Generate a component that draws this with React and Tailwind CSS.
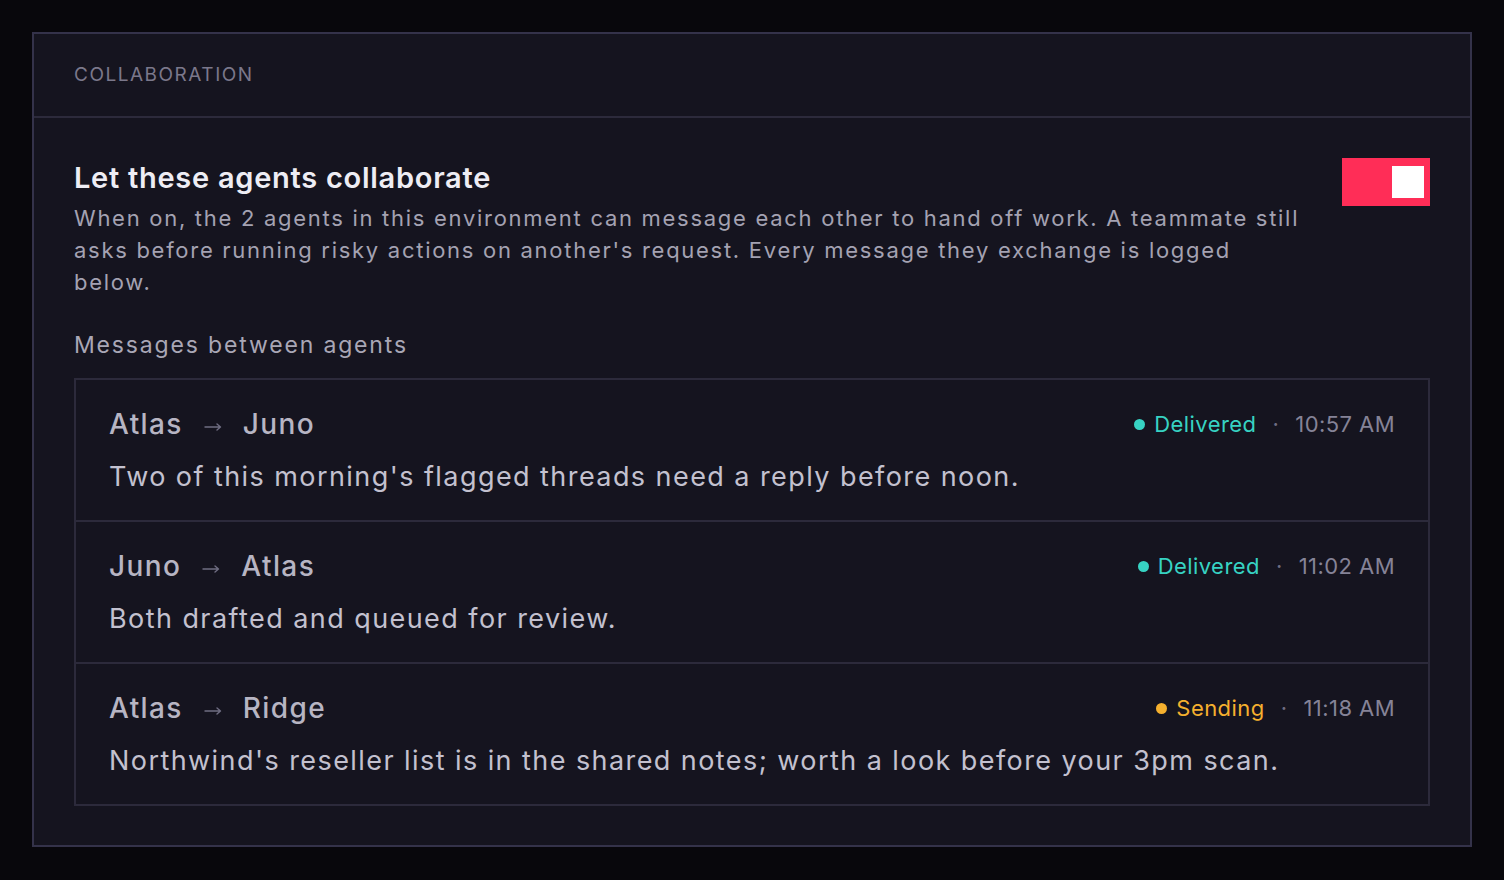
import React, { useState } from 'react';

const messages = [
  {
    from: 'Atlas',
    to: 'Juno',
    status: 'Delivered',
    time: '10:57 AM',
    body: "Two of this morning's flagged threads need a reply before noon.",
  },
  {
    from: 'Juno',
    to: 'Atlas',
    status: 'Delivered',
    time: '11:02 AM',
    body: 'Both drafted and queued for review.',
  },
  {
    from: 'Atlas',
    to: 'Ridge',
    status: 'Sending',
    time: '11:18 AM',
    body: "Northwind's reseller list is in the shared notes; worth a look before your 3pm scan.",
  },
];

const StatusTag = ({ status }) => {
  const sending = status === 'Sending';
  return (
    <span className={`flex items-center gap-[9px] ${sending ? 'text-[#f5b02e]' : 'text-[#37d3c3]'}`}>
      <span className={`h-[11px] w-[11px] rounded-full ${sending ? 'bg-[#f5b02e]' : 'bg-[#37d3c3]'}`} />
      {status}
    </span>
  );
};

const Arrow = () => (
  <svg width="18" height="10" viewBox="0 0 18 10" className="mx-[21px] mt-[6px] text-[#6f6d82]" fill="none">
    <path d="M1 5h15.5M13 2l3.5 3-3.5 3" stroke="currentColor" strokeWidth="1.4" strokeLinecap="round" strokeLinejoin="round" />
  </svg>
);

const MessageRow = ({ msg, last }) => (
  <div className={`flex flex-col px-[33px] pt-[26px] ${last ? 'h-[140px]' : 'h-[142px] border-b-2 border-[#2c2a3b]'}`}>
    <div className="flex h-[36px] items-center justify-between">
      <div className="flex items-center text-[28px] font-medium tracking-[0.05em] text-[#b7b5c3]">
        <span>{msg.from}</span>
        <Arrow />
        <span>{msg.to}</span>
      </div>
      <div className="flex items-center text-[22px] tracking-[0.02em]">
        <StatusTag status={msg.status} />
        <span className="mx-[16px] text-[#6f6d82]">·</span>
        <span className="text-[#858397]">{msg.time}</span>
      </div>
    </div>
    <p className="mt-[17px] text-[27px] leading-[36px] tracking-[0.053em] text-[#c3c1cf]">{msg.body}</p>
  </div>
);

export default function App() {
  const [enabled, setEnabled] = useState(true);

  return (
    <div
      className="min-h-[880px] bg-[#08070c] p-[32px]"
      style={{ fontFamily: 'Inter, "Noto Sans", sans-serif' }}
    >
      <div className="border-2 border-[#34324a] bg-[#15141f]">
        <div className="flex h-[84px] items-center border-b-2 border-[#2c2a3b] px-[40px]">
          <h2 className="text-[19px] tracking-[0.08em] text-[#7b788b]">COLLABORATION</h2>
        </div>

        <div className="px-[40px] pb-[39px] pt-[42px]">
          <div className="flex items-start justify-between gap-6">
            <div>
              <h3 className="text-[29px] font-semibold leading-[36px] tracking-[0.025em] text-[#eeedf4]">
                Let these agents collaborate
              </h3>
              <p className="mt-[6px] max-w-[1232px] text-[22px] leading-[32px] tracking-[0.078em] text-[#a4a2b2]">
                When on, the 2 agents in this environment can message each other to hand off work. A teammate still
                asks before running risky actions on another's request. Every message they exchange is logged below.
              </p>
            </div>
            <button
              onClick={() => setEnabled(!enabled)}
              className={`mt-[-2px] flex h-[48px] w-[88px] shrink-0 items-center px-[6px] ${
                enabled ? 'justify-end bg-[#ff2d57]' : 'justify-start bg-[#34324a]'
              }`}
            >
              <span className="h-[32px] w-[32px] bg-white" />
            </button>
          </div>

          <div className="mt-[31px] text-[23px] leading-[32px] tracking-[0.08em] text-[#a9a7b6]">
            Messages between agents
          </div>

          <div className="mt-[17px] border-2 border-[#2c2a3b]">
            {messages.map((m, i) => (
              <MessageRow key={i} msg={m} last={i === messages.length - 1} />
            ))}
          </div>
        </div>
      </div>
    </div>
  );
}
